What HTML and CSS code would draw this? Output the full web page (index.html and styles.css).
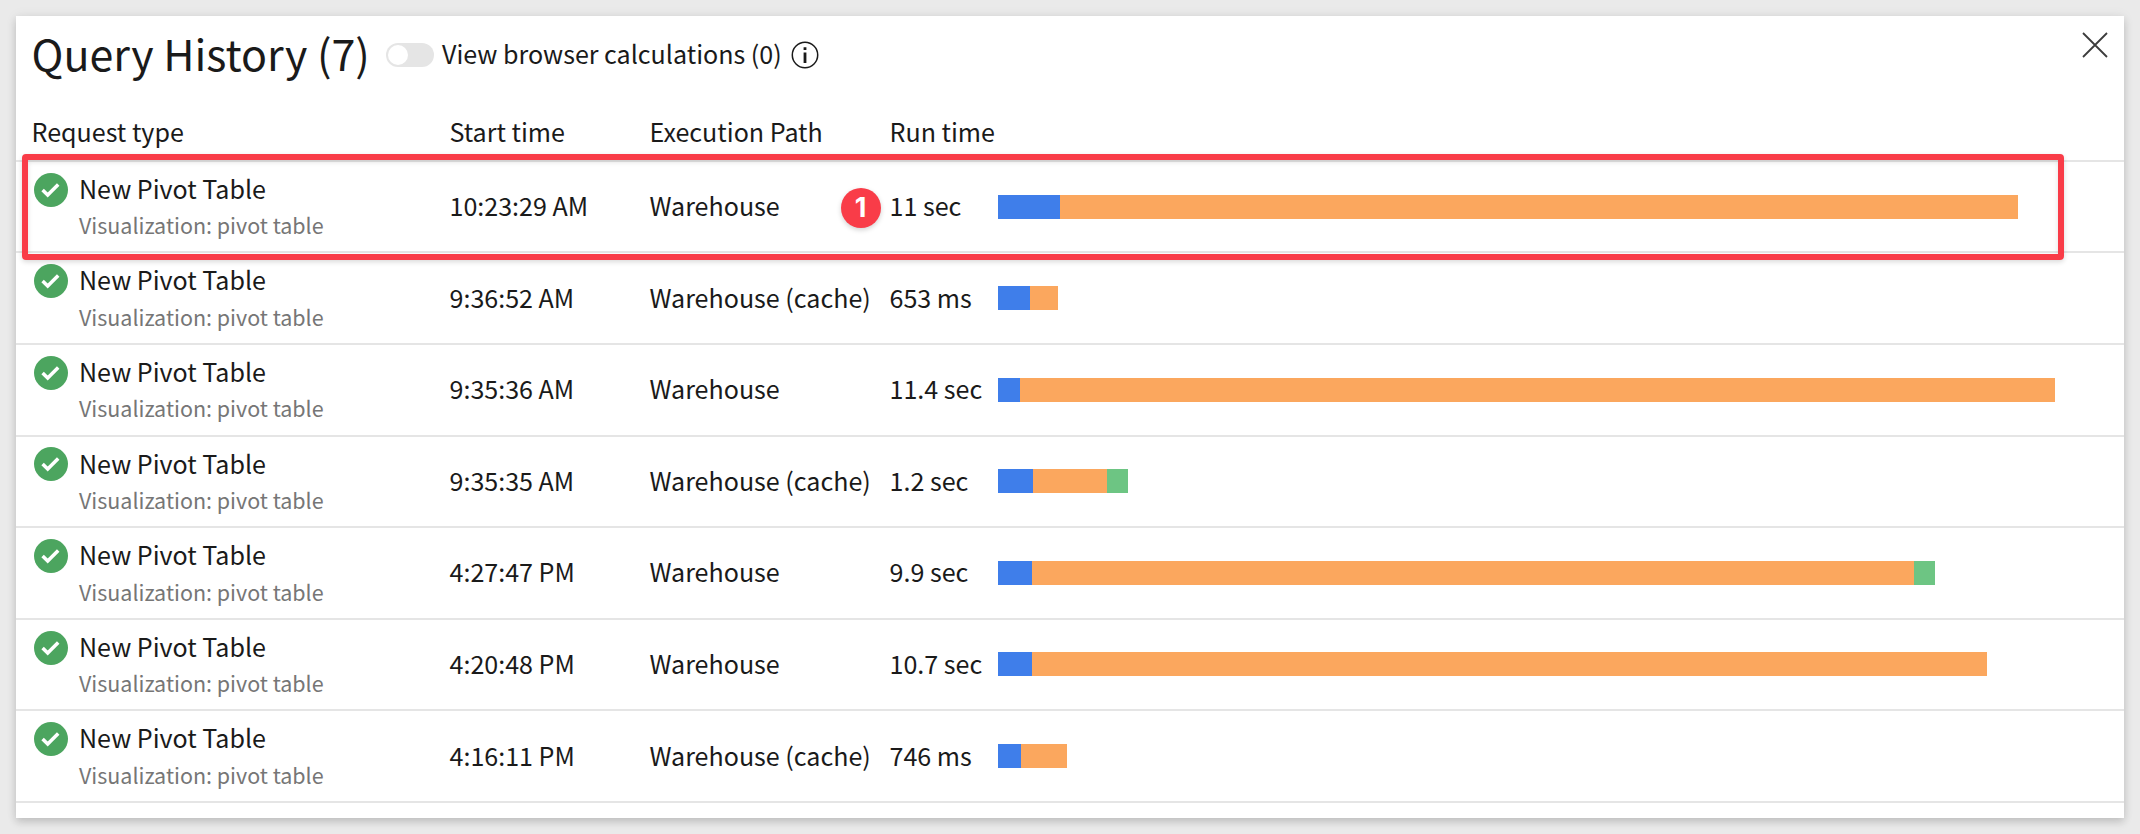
FILE: index.html
```html
<!DOCTYPE html>
<html lang="en">
<head>
<meta charset="utf-8">
<title>Query History</title>
<link rel="stylesheet" href="styles.css">
</head>
<body>
<svg class="symbols" aria-hidden="true">
  <symbol id="check" viewBox="0 0 34 34">
    <circle cx="17" cy="17" r="17" fill="#4ca55f"/>
    <path d="M8.6 16.9l5.1 5.1L24.2 11.4" fill="none" stroke="#fff" stroke-width="3.5"/>
  </symbol>
</svg>
<main class="panel">
  <header class="panel-head">
    <h1 class="title">Query History (7)</h1>
    <span class="toggle"><span class="knob"></span></span>
    <span class="toggle-label">View browser calculations (0)</span>
    <svg class="info" viewBox="0 0 28 28"><circle cx="14" cy="14" r="12.7" fill="none" stroke="#1a1a1a" stroke-width="1.5"/><path d="M14 6.2V9M14 11.4V22" stroke="#1a1a1a" stroke-width="2.8"/></svg>
    <svg class="close" viewBox="0 0 26 26"><path d="M1 1l24 24M25 1L1 25" stroke="#3c3c3c" stroke-width="1.8"/></svg>
  </header>
  <div class="columns">
    <span>Request type</span><span>Start time</span><span>Execution Path</span><span>Run time</span>
  </div>
  <section class="rows">
    <div class="row"><div class="request"><svg class="status"><use href="#check"/></svg><div><div class="name">New Pivot Table</div><div class="sub">Visualization: pivot table</div></div></div><span class="cell">10:23:29 AM</span><span class="cell">Warehouse</span><span class="cell">11 sec</span><div class="bar"><i class="blue" style="width:62px"></i><i class="orange" style="width:958px"></i></div>
      <div class="highlight"></div><div class="marker">1</div></div>
    <div class="row"><div class="request"><svg class="status"><use href="#check"/></svg><div><div class="name">New Pivot Table</div><div class="sub">Visualization: pivot table</div></div></div><span class="cell">9:36:52 AM</span><span class="cell">Warehouse (cache)</span><span class="cell">653 ms</span><div class="bar"><i class="blue" style="width:32px"></i><i class="orange" style="width:28px"></i></div></div>
    <div class="row"><div class="request"><svg class="status"><use href="#check"/></svg><div><div class="name">New Pivot Table</div><div class="sub">Visualization: pivot table</div></div></div><span class="cell">9:35:36 AM</span><span class="cell">Warehouse</span><span class="cell">11.4 sec</span><div class="bar"><i class="blue" style="width:22px"></i><i class="orange" style="width:1035px"></i></div></div>
    <div class="row"><div class="request"><svg class="status"><use href="#check"/></svg><div><div class="name">New Pivot Table</div><div class="sub">Visualization: pivot table</div></div></div><span class="cell">9:35:35 AM</span><span class="cell">Warehouse (cache)</span><span class="cell">1.2 sec</span><div class="bar"><i class="blue" style="width:35px"></i><i class="orange" style="width:74px"></i><i class="green" style="width:21px"></i></div></div>
    <div class="row"><div class="request"><svg class="status"><use href="#check"/></svg><div><div class="name">New Pivot Table</div><div class="sub">Visualization: pivot table</div></div></div><span class="cell">4:27:47 PM</span><span class="cell">Warehouse</span><span class="cell">9.9 sec</span><div class="bar"><i class="blue" style="width:34px"></i><i class="orange" style="width:882px"></i><i class="green" style="width:21px"></i></div></div>
    <div class="row"><div class="request"><svg class="status"><use href="#check"/></svg><div><div class="name">New Pivot Table</div><div class="sub">Visualization: pivot table</div></div></div><span class="cell">4:20:48 PM</span><span class="cell">Warehouse</span><span class="cell">10.7 sec</span><div class="bar"><i class="blue" style="width:34px"></i><i class="orange" style="width:955px"></i></div></div>
    <div class="row"><div class="request"><svg class="status"><use href="#check"/></svg><div><div class="name">New Pivot Table</div><div class="sub">Visualization: pivot table</div></div></div><span class="cell">4:16:11 PM</span><span class="cell">Warehouse (cache)</span><span class="cell">746 ms</span><div class="bar"><i class="blue" style="width:23px"></i><i class="orange" style="width:46px"></i></div></div>
  </section>
</main>
</body>
</html>
```
FILE: styles.css
```css
* { box-sizing: border-box; }
html { height: 834px; overflow: hidden; }
body {
  margin: 0;
  height: 834px;
  padding: 16px;
  overflow: hidden;
  background: #eaeaea;
  color: #1a1a1a;
  font: 25.07px/36px "Noto Sans CJK SC", "Noto Sans", sans-serif;
}
.symbols { display: none; }
.panel {
  height: 802px;
  background: #fff;
  box-shadow: 0 4px 8px rgba(0, 0, 0, .16), 0 0 12px rgba(0, 0, 0, .06);
}
.panel-head {
  display: flex;
  align-items: center;
  height: 78px;
  padding: 0 16px 0 15.5px;
}
.title {
  margin: 0;
  width: 354.5px;
  padding-bottom: 7px;
  font-size: 42.97px;
  font-weight: 400;
  line-height: 60px;
  white-space: nowrap;
}
.toggle {
  width: 48px;
  height: 24px;
  padding: 2px;
  border-radius: 12px;
  background: #e5e5e5;
}
.knob {
  display: block;
  width: 20px;
  height: 20px;
  border-radius: 50%;
  background: #fff;
}
.toggle-label {
  margin-left: 8px;
  width: 349px;
  padding-bottom: 4px;
  white-space: nowrap;
}
.info { width: 28px; height: 28px; }
.close { width: 26px; height: 26px; margin: -20px 0 0 auto; }
.columns {
  display: grid;
  grid-template-columns: 418px 200px 240px 118px 1fr;
  height: 65.8px;
  padding: 19px 0 0 15.5px;
  white-space: nowrap;
}
.row {
  position: relative;
  display: grid;
  grid-template-columns: 418px 200px 240px 108.5px 1fr;
  align-items: center;
  height: 91.58px;
  padding-left: 15.5px;
  border-top: 2px solid #e5e5e5;
  white-space: nowrap;
}
.row:last-child { height: 93.58px; border-bottom: 2px solid #e5e5e5; }
.cell { padding-bottom: 3px; }
.request { display: flex; gap: 11px; }
.status { width: 34px; height: 34px; margin: 2.9px 0 0 2.5px; }
.name { height: 37.5px; }
.sub { font-size: 21.49px; color: #767676; }
.bar { display: flex; height: 24px; }
.blue { background: #3f7eea; }
.orange { background: #fba75e; }
.green { background: #6dc583; }
.highlight {
  position: absolute;
  left: 5.5px;
  top: -8px;
  width: 2042px;
  height: 106px;
  border: 6px solid #f93c48;
  border-radius: 4px;
  box-shadow: 0 2px 5px rgba(0, 0, 0, .15), inset 0 2px 5px rgba(0, 0, 0, .12);
  z-index: 1;
}
.marker {
  position: absolute;
  left: 824.5px;
  top: 26px;
  width: 40px;
  height: 40px;
  border-radius: 50%;
  background: #f93c48;
  box-shadow: 0 2px 5px rgba(0, 0, 0, .18);
  color: #fff;
  font: 700 27px/40px Inter, sans-serif;
  text-align: center;
}
```
